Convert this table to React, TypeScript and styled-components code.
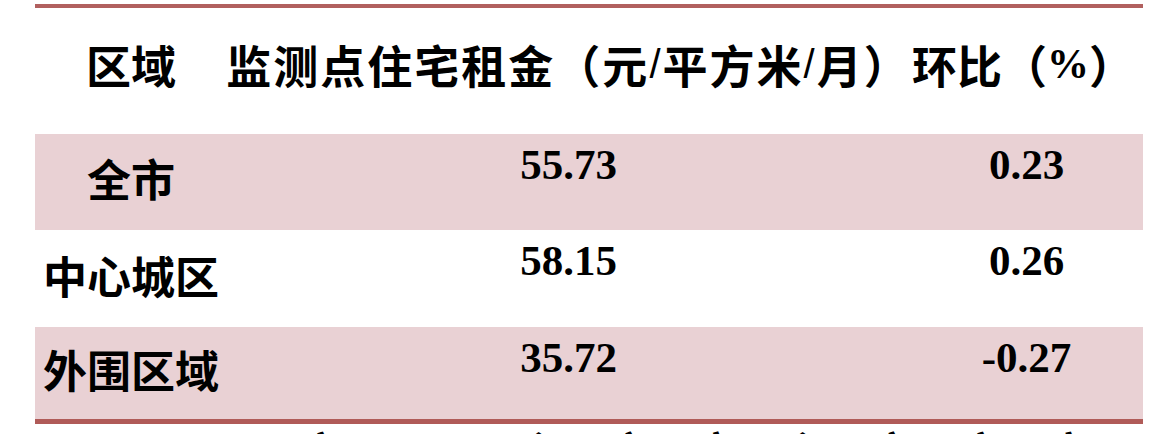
import React from 'react';
import styled, { createGlobalStyle } from 'styled-components';

type Row = {
  area: string;
  rent: string;
  change: string;
  height: number;
  shaded?: boolean;
};

const rows: Row[] = [
  { area: '全市', rent: '55.73', change: '0.23', height: 96, shaded: true },
  { area: '中心城区', rent: '58.15', change: '0.26', height: 97 },
  { area: '外围区域', rent: '35.72', change: '-0.27', height: 92, shaded: true },
];

// tail of the next paragraph, cut off by the bottom of the shot
const nextLine = '　　　　　　文　　　　主　方　立　主　市　文　高　　方';

const GlobalStyle = createGlobalStyle`
  html, body {
    margin: 0;
    padding: 0;
    background: #ffffff;
  }
  body {
    height: 434px;
    overflow: hidden;
  }
`;

const Page = styled.div`
  padding: 4px 0 0 35px;
  width: 1108px;
`;

const Sheet = styled.div`
  border-top: 4px solid #b1605f;
  border-bottom: 5px solid #b05b58;
`;

const GridRow = styled.div<{ $height: number; $shaded?: boolean }>`
  display: grid;
  grid-template-columns: 192px 683px 233px;
  height: ${(p) => p.$height}px;
  background: ${(p) => (p.$shaded ? '#e9d1d4' : '#ffffff')};
`;

const HeadCell = styled.div<{ $align?: 'center' | 'start'; $spacing?: number }>`
  display: flex;
  align-items: center;
  justify-content: ${(p) => (p.$align === 'start' ? 'flex-start' : 'center')};
  padding-left: ${(p) => (p.$align === 'start' ? '2px' : '0')};
  padding-bottom: 14px;
  font-family: 'Noto Sans CJK SC', 'Noto Sans', sans-serif;
  font-weight: 700;
  font-size: 45px;
  letter-spacing: ${(p) => p.$spacing ?? 0}px;
  line-height: 1;
  color: #000000;
  white-space: nowrap;
`;

const Slash = styled.span`
  font-family: 'Liberation Sans', sans-serif;
  font-weight: 400;
  font-size: 40px;
`;

const Percent = styled.span`
  font-family: 'Liberation Serif', serif;
  font-weight: 700;
  font-size: 42px;
`;

const LabelCell = styled.div`
  display: flex;
  align-items: center;
  justify-content: center;
  padding-bottom: 8px;
  font-family: 'Noto Sans CJK SC', 'Noto Sans', sans-serif;
  font-weight: 700;
  font-size: 44px;
  line-height: 1;
  color: #000000;
  white-space: nowrap;
`;

const ValueCell = styled.div`
  display: flex;
  justify-content: center;
  padding-top: 9px;
  font-family: 'Liberation Serif', serif;
  font-weight: 700;
  font-size: 43px;
  line-height: 1;
  color: #000000;
`;

const NextLine = styled.div`
  margin-left: 35px;
  margin-top: 5px;
  font-family: 'Noto Sans CJK SC', 'Noto Sans', sans-serif;
  font-weight: 700;
  font-size: 44px;
  line-height: 1;
  color: #000000;
  white-space: pre;
`;

const App = () => (
  <>
    <GlobalStyle />
    <Page>
      <Sheet>
        <GridRow $height={126}>
          <HeadCell>区域</HeadCell>
          <HeadCell $spacing={2}>
            监测点住宅租金（元<Slash>/</Slash>平方米<Slash>/</Slash>月）
          </HeadCell>
          <HeadCell $align="start">
            环比（<Percent>%</Percent>）
          </HeadCell>
        </GridRow>
        {rows.map((row) => (
          <GridRow key={row.area} $height={row.height} $shaded={row.shaded}>
            <LabelCell>{row.area}</LabelCell>
            <ValueCell>{row.rent}</ValueCell>
            <ValueCell>{row.change}</ValueCell>
          </GridRow>
        ))}
      </Sheet>
    </Page>
    <NextLine>{nextLine}</NextLine>
  </>
);

export default App;
